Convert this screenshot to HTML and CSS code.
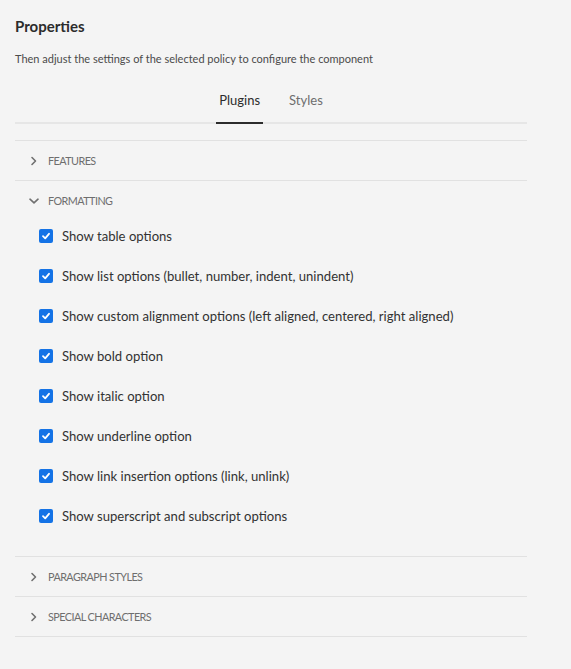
FILE: index.html
```html
<!DOCTYPE html>
<html lang="en">
<head>
<meta charset="utf-8">
<title>Properties</title>
<link rel="stylesheet" href="styles.css">
</head>
<body>
<div class="panel">
  <h1 class="title">Properties</h1>
  <p class="subtitle">Then adjust the settings of the selected policy to configure the component</p>
  <div class="tabs">
    <div class="tab tab-active">Plugins</div>
    <div class="tab">Styles</div>
  </div>
  <div class="accordion">
    <div class="section">
      <div class="section-head">
        <svg class="chev" width="10" height="10" viewBox="0 0 10 10"><path d="M3 1.5 L6.5 5 L3 8.5" fill="none" stroke="#707070" stroke-width="1.6" stroke-linecap="round" stroke-linejoin="round"/></svg>
        <span class="section-label">Features</span>
      </div>
    </div>
    <div class="section">
      <div class="section-head">
        <svg class="chev" width="10" height="10" viewBox="0 0 10 10"><path d="M1 3.2 L5 6.8 L9 3.2" fill="none" stroke="#707070" stroke-width="1.6" stroke-linecap="round" stroke-linejoin="round"/></svg>
        <span class="section-label">Formatting</span>
      </div>
      <div class="section-body">
        <label class="check"><span class="box"><svg width="10" height="10" viewBox="0 0 10 10"><path d="M2 5.2 L4.2 7.3 L8 2.8" fill="none" stroke="#fff" stroke-width="1.8" stroke-linecap="round" stroke-linejoin="round"/></svg></span>Show table options</label>
        <label class="check"><span class="box"><svg width="10" height="10" viewBox="0 0 10 10"><path d="M2 5.2 L4.2 7.3 L8 2.8" fill="none" stroke="#fff" stroke-width="1.8" stroke-linecap="round" stroke-linejoin="round"/></svg></span>Show list options (bullet, number, indent, unindent)</label>
        <label class="check"><span class="box"><svg width="10" height="10" viewBox="0 0 10 10"><path d="M2 5.2 L4.2 7.3 L8 2.8" fill="none" stroke="#fff" stroke-width="1.8" stroke-linecap="round" stroke-linejoin="round"/></svg></span>Show custom alignment options (left aligned, centered, right aligned)</label>
        <label class="check"><span class="box"><svg width="10" height="10" viewBox="0 0 10 10"><path d="M2 5.2 L4.2 7.3 L8 2.8" fill="none" stroke="#fff" stroke-width="1.8" stroke-linecap="round" stroke-linejoin="round"/></svg></span>Show bold option</label>
        <label class="check"><span class="box"><svg width="10" height="10" viewBox="0 0 10 10"><path d="M2 5.2 L4.2 7.3 L8 2.8" fill="none" stroke="#fff" stroke-width="1.8" stroke-linecap="round" stroke-linejoin="round"/></svg></span>Show italic option</label>
        <label class="check"><span class="box"><svg width="10" height="10" viewBox="0 0 10 10"><path d="M2 5.2 L4.2 7.3 L8 2.8" fill="none" stroke="#fff" stroke-width="1.8" stroke-linecap="round" stroke-linejoin="round"/></svg></span>Show underline option</label>
        <label class="check"><span class="box"><svg width="10" height="10" viewBox="0 0 10 10"><path d="M2 5.2 L4.2 7.3 L8 2.8" fill="none" stroke="#fff" stroke-width="1.8" stroke-linecap="round" stroke-linejoin="round"/></svg></span>Show link insertion options (link, unlink)</label>
        <label class="check"><span class="box"><svg width="10" height="10" viewBox="0 0 10 10"><path d="M2 5.2 L4.2 7.3 L8 2.8" fill="none" stroke="#fff" stroke-width="1.8" stroke-linecap="round" stroke-linejoin="round"/></svg></span>Show superscript and subscript options</label>
      </div>
    </div>
    <div class="section">
      <div class="section-head">
        <svg class="chev" width="10" height="10" viewBox="0 0 10 10"><path d="M3 1.5 L6.5 5 L3 8.5" fill="none" stroke="#707070" stroke-width="1.6" stroke-linecap="round" stroke-linejoin="round"/></svg>
        <span class="section-label">Paragraph Styles</span>
      </div>
    </div>
    <div class="section">
      <div class="section-head">
        <svg class="chev" width="10" height="10" viewBox="0 0 10 10"><path d="M3 1.5 L6.5 5 L3 8.5" fill="none" stroke="#707070" stroke-width="1.6" stroke-linecap="round" stroke-linejoin="round"/></svg>
        <span class="section-label">Special Characters</span>
      </div>
    </div>
  </div>
</div>
</body>
</html>
```

FILE: styles.css
```css
html, body {
  margin: 0;
  padding: 0;
  background: #f4f4f4;
}
body {
  font-family: "Lato", "Open Sans", sans-serif;
  color: #2c2c2c;
  width: 571px;
  height: 669px;
}
.panel {
  width: 512px;
  padding: 16px 0 0 15px;
}
.title {
  margin: 0;
  font-size: 15px;
  font-weight: 700;
  line-height: 20px;
  color: #2c2c2c;
}
.subtitle {
  margin: 16px 0 0;
  font-size: 11px;
  line-height: 14px;
  color: #4b4b4b;
}
.tabs {
  display: flex;
  justify-content: center;
  gap: 23px;
  margin-top: 18px;
  border-bottom: 2px solid #e6e6e6;
}
.tab {
  font-size: 13px;
  line-height: 16px;
  padding: 8px 3px 14px;
  color: #6e6e6e;
  margin-bottom: -2px;
  border-bottom: 2px solid transparent;
}
.tab-active {
  color: #2c2c2c;
  border-bottom-color: #2c2c2c;
}
.accordion {
  margin-top: 16px;
  border-top: 1px solid #e1e1e1;
}
.section {
  border-bottom: 1px solid #e1e1e1;
}
.section-head {
  height: 39px;
  display: flex;
  align-items: center;
  padding-left: 14px;
  gap: 9px;
}
.chev {
  flex: none;
}
.section-label {
  font-size: 10.8px;
  text-transform: uppercase;
  color: #6e6e6e;
  letter-spacing: -0.55px;
}
.section-body {
  display: flex;
  flex-direction: column;
  gap: 16px;
  padding: 4px 0 28px 24px;
}
.check {
  display: flex;
  align-items: center;
  height: 24px;
  gap: 9px;
  font-size: 13.1px;
  color: #323232;
}
.box {
  width: 14px;
  height: 14px;
  border-radius: 2px;
  background: #1473e6;
  display: flex;
  align-items: center;
  justify-content: center;
  flex: none;
}
.box svg {
  display: block;
}
```
